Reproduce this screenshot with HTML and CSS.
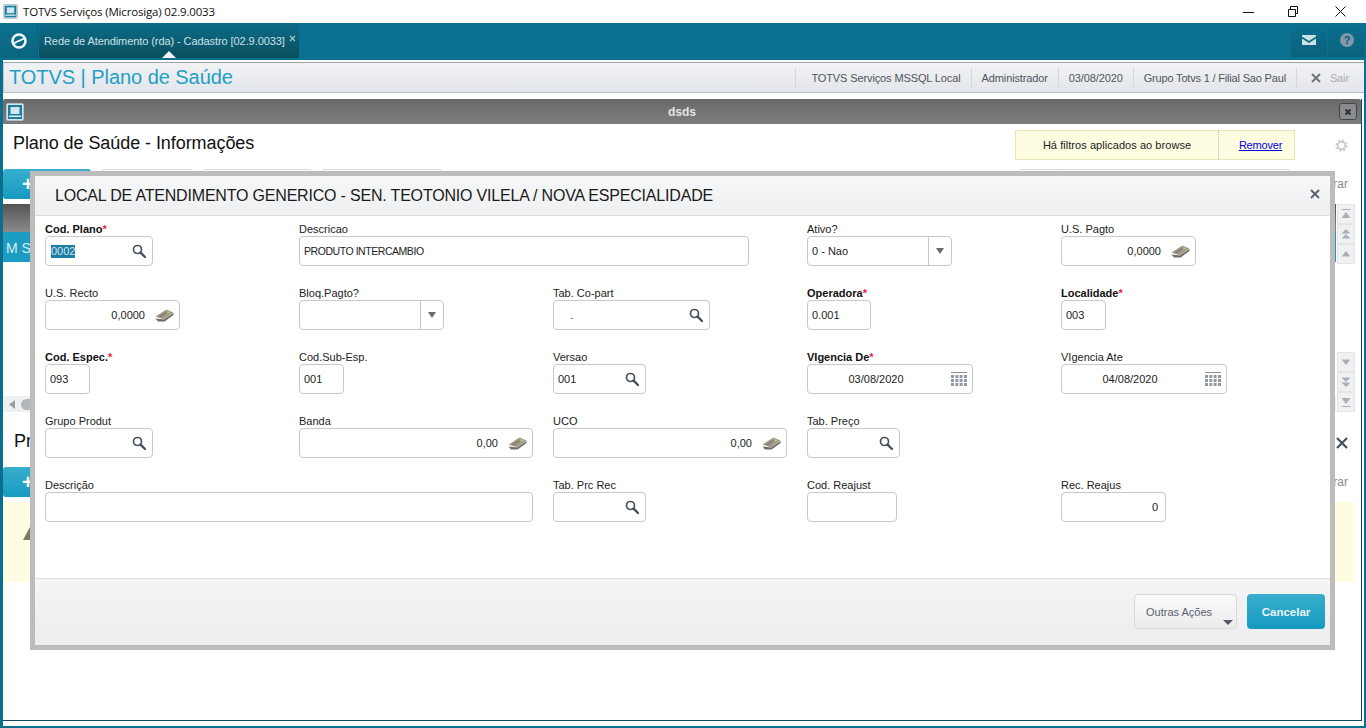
FILE: index.html
```html
<!DOCTYPE html>
<html lang="pt-BR">
<head>
<meta charset="utf-8">
<title>TOTVS Serviços (Microsiga) 02.9.0033</title>
<link rel="stylesheet" href="styles.css">
</head>
<body>
<svg class="defs" width="0" height="0" aria-hidden="true">
  <defs>
    <symbol id="i-search" viewBox="0 0 14 14"><circle cx="5.5" cy="5.5" r="4" fill="#fff" stroke="#46505e" stroke-width="1.7"/><path d="M8.6 8.6 13 13" stroke="#46505e" stroke-width="2.4" stroke-linecap="round"/></symbol>
    <symbol id="i-money" viewBox="0 0 19 14"><path d="M0.500 10.500 3 13.500H9.500L18.500 7V5L9 11.500Z" fill="#6f6b62"/><path d="M0.500 8.500 11.500 1.500 18.500 4.500 9 11.500Z" fill="#a29c8e"/><path d="M3 8.500 11.500 3 14 4 6 9.800Z" fill="#8d8778"/><path d="M10.500 3.700 12.500 2.400 16.500 4.400 13.800 6.300Z" fill="#95a87a"/><path d="M12 3.900 13 3.200 15 4.400 13.800 5.300Z" fill="#bddb7c"/></symbol>
    <symbol id="i-cal" viewBox="0 0 16 14"><path d="M0 0.5H16" stroke="#8c929c" stroke-width="1"/><g fill="#9299a3"><rect x="0" y="3" width="3" height="3"/><rect x="4.300" y="3" width="3" height="3"/><rect x="8.600" y="3" width="3" height="3"/><rect x="13" y="3" width="3" height="3"/><rect x="0" y="7" width="3" height="3"/><rect x="4.300" y="7" width="3" height="3"/><rect x="8.600" y="7" width="3" height="3"/><rect x="13" y="7" width="3" height="3"/><rect x="0" y="11" width="3" height="3"/><rect x="4.300" y="11" width="3" height="3"/><rect x="8.600" y="11" width="3" height="3"/><rect x="13" y="11" width="3" height="3"/></g></symbol>
    <symbol id="i-monitor" viewBox="0 0 18 18"><rect x="0.500" y="0.500" width="17" height="17" rx="1.500" fill="#d8e6ec" stroke="#aebfc8"/><rect x="2" y="2" width="14" height="14" fill="#1d7b9f"/><rect x="4.500" y="4" width="9" height="7" fill="#cfe6ef"/><path d="M3.500 12.500H14.500L15.500 14H2.500Z" fill="#e7f1f5"/></symbol>
    <symbol id="i-top" viewBox="0 0 10 10"><path d="M.5 0H9.500V1H.5Z M5 3 9.500 9H.5Z" fill="#aab0b8"/></symbol>
    <symbol id="i-up2" viewBox="0 0 10 10"><path d="M5 0 9.500 4.500H.5Z M5 5 9.500 9.500H.5Z" fill="#aab0b8"/></symbol>
    <symbol id="i-up" viewBox="0 0 10 10"><path d="M5 2 9.500 7.500H.5Z" fill="#aab0b8"/></symbol>
    <symbol id="i-down" viewBox="0 0 10 10"><path d="M5 8 9.500 2.500H.5Z" fill="#aab0b8"/></symbol>
    <symbol id="i-down2" viewBox="0 0 10 10"><path d="M5 5 9.500 .5H.5Z M5 10 9.500 5.500H.5Z" fill="#aab0b8"/></symbol>
    <symbol id="i-bottom" viewBox="0 0 10 10"><path d="M5 7 9.500 1H.5Z M.5 9H9.500V10H.5Z" fill="#aab0b8"/></symbol>
  </defs>
</svg>

<header class="titlebar">
  <svg class="title-icon" width="15" height="15"><use href="#i-monitor"/></svg>
  <span class="title-text">TOTVS Serviços (Microsiga) 02.9.0033</span>
  <div class="winctrls">
    <svg width="11" height="11" viewBox="0 0 11 11"><path d="M0 6.500H11" stroke="#111"/></svg>
    <svg class="ctrl-restore" width="10" height="11" viewBox="0 0 10 11"><path d="M.5 3.500H7.500V10.500H.5Z M2.500 3V.5H9.500V7.500H8" fill="none" stroke="#111"/></svg>
    <svg width="11" height="11" viewBox="0 0 11 11"><path d="M.5 .5 10.500 10.500M10.500 .5 .5 10.500" stroke="#111"/></svg>
  </div>
</header>

<nav class="appbar">
  <div class="logo-cell">
    <svg width="18" height="18" viewBox="0 0 18 18"><circle cx="9" cy="9" r="6.500" fill="none" stroke="#eef5f7" stroke-width="2.600"/><path d="M4 11.500C8 8.500 9 9.500 14 6.500" fill="none" stroke="#eef5f7" stroke-width="2"/></svg>
  </div>
  <div class="tab">
    <span class="tab-text">Rede de Atendimento (rda) - Cadastro [02.9.0033]</span>
    <svg width="7" height="7" viewBox="0 0 7 7"><path d="M1 1 6 6M6 1 1 6" stroke="#a8c6d0" stroke-width="1.200"/></svg>
    <i class="tab-mark"></i>
  </div>
  <div class="app-actions">
    <div class="app-action mail">
      <svg width="14" height="10" viewBox="0 0 14 10"><path d="M0 0H14V1.500L7 6 0 1.500Z M0 3.500 7 8 14 3.500V10H0Z" fill="#cfe0e6"/></svg>
    </div>
    <div class="app-action help">
      <svg width="14" height="14" viewBox="0 0 14 14"><circle cx="7" cy="7" r="7" fill="#7f9aa8"/><text class="help-q" x="7" y="11" text-anchor="middle">?</text></svg>
    </div>
  </div>
</nav>

<div class="workspace">
  <div class="modulebar">
    <h1 class="module-title">TOTVS | Plano de Saúde</h1>
    <div class="status">
      <span class="status-item first">TOTVS Serviços MSSQL Local</span>
      <span class="status-item">Administrador</span>
      <span class="status-item">03/08/2020</span>
      <span class="status-item group">Grupo Totvs 1 / Filial Sao Paul</span>
      <span class="status-item logout">
        <svg width="10" height="10" viewBox="0 0 10 10"><path d="M1 1 9 9M9 1 1 9" stroke="#6d7480" stroke-width="2"/></svg>
        <span>Sair</span>
      </span>
    </div>
  </div>

  <section class="window">
    <div class="window-bar">
      <svg width="18" height="18"><use href="#i-monitor"/></svg>
      <span class="window-name">dsds</span>
      <span class="window-close"><svg width="8" height="8" viewBox="0 0 8 8"><path d="M1.500 1.500 6.500 6.500M6.500 1.500 1.500 6.500" stroke="#2b3442" stroke-width="2"/></svg></span>
    </div>

    <div class="panel-head">
      <h2 class="panel-title">Plano de Saúde - Informações</h2>
      <div class="filter-note">
        <span class="filter-text">Há filtros aplicados ao browse</span>
        <a class="filter-link" href="#">Remover</a>
      </div>
      <svg class="gear" width="13" height="13" viewBox="0 0 14 14"><circle cx="7" cy="7" r="4" fill="none" stroke="#c9cdd2" stroke-width="2"/><circle cx="7" cy="7" r="5.600" fill="none" stroke="#c9cdd2" stroke-width="2" stroke-dasharray="2.200 2.200"/></svg>
    </div>

    <div class="toolbar">
      <button class="tb-primary">+</button>
      <span class="tb-outline tb-a"></span>
      <span class="tb-outline tb-b"></span>
      <span class="tb-outline tb-c"></span>
      <div class="search"><span class="search-btn"></span><span class="search-box"></span></div>
      <span class="filter-label">rar</span>
    </div>

    <div class="browse">
      <div class="browse-table">
        <div class="browse-head"></div>
        <div class="browse-row">M S</div>
        <div class="browse-fill"></div>
        <div class="hscroll"><svg width="7" height="9" viewBox="0 0 7 9"><path d="M6 0V9L0 4.500Z" fill="#9aa0a8"/></svg><i class="hthumb"></i></div>
      </div>
      <div class="vscroll">
        <span class="sb-btn"><svg width="10" height="10"><use href="#i-top"/></svg></span>
        <span class="sb-btn"><svg width="10" height="10"><use href="#i-up2"/></svg></span>
        <span class="sb-btn"><svg width="10" height="10"><use href="#i-up"/></svg></span>
        <span class="sb-gap"></span>
        <span class="sb-btn"><svg width="10" height="10"><use href="#i-down"/></svg></span>
        <span class="sb-btn"><svg width="10" height="10"><use href="#i-down2"/></svg></span>
        <span class="sb-btn"><svg width="10" height="10"><use href="#i-bottom"/></svg></span>
      </div>
    </div>

    <div class="section-head">
      <h2 class="panel-title">Pr</h2>
      <svg width="12" height="12" viewBox="0 0 12 12"><path d="M1 1 11 11M11 1 1 11" stroke="#46505e" stroke-width="2.200"/></svg>
    </div>

    <div class="toolbar second">
      <button class="tb-primary">+</button>
      <span class="filter-label">rar</span>
    </div>

    <div class="warning">
      <svg width="16" height="15" viewBox="0 0 16 15"><path d="M8 0 16 15H0Z" fill="#7c7a63"/></svg>
    </div>
  </section>

  <div class="modal">
    <div class="modal-head">
      <h3 class="modal-title">LOCAL DE ATENDIMENTO GENERICO - SEN. TEOTONIO VILELA / NOVA ESPECIALIDADE</h3>
      <svg class="modal-close" width="10" height="10" viewBox="0 0 10 10"><path d="M1 1 9 9M9 1 1 9" stroke="#5a6270" stroke-width="2"/></svg>
    </div>
    <form class="form">
      <div class="field"><label class="req">Cod. Plano<em>*</em></label><div class="input w108"><span class="selected">0002</span><svg class="ic-search" width="14" height="14"><use href="#i-search"/></svg></div></div>
      <div class="field span2"><label>Descricao</label><div class="input w450"><span class="val caps">PRODUTO INTERCAMBIO</span></div></div>
      <div class="field"><label>Ativo?</label><div class="input select w145"><span class="val">0 - Nao</span><i class="caret-cell"><i class="caret"></i></i></div></div>
      <div class="field"><label>U.S. Pagto</label><div class="input w135"><span class="val right">0,0000</span><svg class="ic-money" width="19" height="14"><use href="#i-money"/></svg></div></div>

      <div class="field"><label>U.S. Recto</label><div class="input w135"><span class="val right">0,0000</span><svg class="ic-money" width="19" height="14"><use href="#i-money"/></svg></div></div>
      <div class="field"><label>Bloq.Pagto?</label><div class="input select w145"><span class="val"></span><i class="caret-cell"><i class="caret"></i></i></div></div>
      <div class="field"><label>Tab. Co-part</label><div class="input w157"><span class="val pre">    .</span><svg class="ic-search" width="14" height="14"><use href="#i-search"/></svg></div></div>
      <div class="field"><label class="req">Operadora<em>*</em></label><div class="input w64"><span class="val">0.001</span></div></div>
      <div class="field"><label class="req">Localidade<em>*</em></label><div class="input w45"><span class="val">003</span></div></div>

      <div class="field"><label class="req">Cod. Espec.<em>*</em></label><div class="input w45"><span class="val">093</span></div></div>
      <div class="field"><label>Cod.Sub-Esp.</label><div class="input w45"><span class="val">001</span></div></div>
      <div class="field"><label>Versao</label><div class="input w93"><span class="val">001</span><svg class="ic-search" width="14" height="14"><use href="#i-search"/></svg></div></div>
      <div class="field"><label class="req">VIgencia De<em>*</em></label><div class="input w166"><span class="val center">03/08/2020</span><svg class="ic-cal" width="16" height="14"><use href="#i-cal"/></svg></div></div>
      <div class="field"><label>VIgencia Ate</label><div class="input w166"><span class="val center">04/08/2020</span><svg class="ic-cal" width="16" height="14"><use href="#i-cal"/></svg></div></div>

      <div class="field"><label>Grupo Produt</label><div class="input w108"><span class="val"></span><svg class="ic-search" width="14" height="14"><use href="#i-search"/></svg></div></div>
      <div class="field"><label>Banda</label><div class="input w234"><span class="val right">0,00</span><svg class="ic-money" width="19" height="14"><use href="#i-money"/></svg></div></div>
      <div class="field"><label>UCO</label><div class="input w234"><span class="val right">0,00</span><svg class="ic-money" width="19" height="14"><use href="#i-money"/></svg></div></div>
      <div class="field row-end"><label>Tab. Preço</label><div class="input w93"><span class="val"></span><svg class="ic-search" width="14" height="14"><use href="#i-search"/></svg></div></div>

      <div class="field span2"><label>Descrição</label><div class="input w488"><span class="val"></span></div></div>
      <div class="field"><label>Tab. Prc Rec</label><div class="input w93"><span class="val"></span><svg class="ic-search" width="14" height="14"><use href="#i-search"/></svg></div></div>
      <div class="field"><label>Cod. Reajust</label><div class="input w90"><span class="val"></span></div></div>
      <div class="field"><label>Rec. Reajus</label><div class="input w105"><span class="val right plain">0</span></div></div>
    </form>
    <footer class="modal-foot">
      <button class="btn-more" type="button">Outras Ações<i class="more-caret"></i></button>
      <button class="btn-cancel" type="button">Cancelar</button>
    </footer>
  </div>
</div>
</body>
</html>
```
FILE: styles.css
```css
* { box-sizing: border-box; }
html, body { margin: 0; padding: 0; }
body {
  width: 1366px;
  height: 728px;
  overflow: hidden;
  display: flex;
  flex-direction: column;
  background: #fff;
  font-family: "Liberation Sans", Arial, sans-serif;
  font-size: 11px;
  color: #222;
}
.defs { position: absolute; }
h1, h2, h3 { margin: 0; font-weight: 400; }

/* OS title bar */
.titlebar { height: 23px; flex: none; display: flex; align-items: center; padding-left: 3px; background: #fff; }
.title-icon { margin-right: 5px; }
.title-text { font-family: "Open Sans", sans-serif; font-size: 11.500px; letter-spacing: -0.17px; color: #111; }
.winctrls { margin-left: auto; display: flex; align-items: center; gap: 34px; padding-right: 20px; }
.ctrl-restore { margin-right: 3px; }

/* App bar */
.appbar { height: 37px; flex: none; display: flex; background: #0b7190; padding-right: 1px; }
.logo-cell { width: 38px; height: 35px; display: flex; align-items: center; justify-content: center; border-right: 1px solid #0a5f7a; background: linear-gradient(#0b7190, #0a6580); }
.tab { position: relative; margin-left: 1px; width: 260px; height: 35px; display: flex; align-items: center; gap: 4px; padding-left: 5px; color: #cfe0e6; font-size: 11px; background: linear-gradient(#0c6d8b, #09505f 95%); }
.tab-text { white-space: nowrap; letter-spacing: -0.08px; }
.tab svg { margin-top: -4px; }
.tab-mark { position: absolute; left: 123px; bottom: 0; width: 0; height: 0; border: 7px solid transparent; border-top: 0; border-bottom-color: #f2f4f5; }
.app-actions { margin-left: auto; display: flex; gap: 1px; }
.app-action { height: 34px; display: flex; align-items: center; justify-content: center; background: linear-gradient(#0b7190, #0a617c); }
.mail { width: 36px; }
.help { width: 37px; }
.help-q { font: 700 11px "Liberation Sans", sans-serif; fill: #0a5a72; }

/* Workspace */
.workspace { position: relative; flex: 1; min-height: 0; display: flex; flex-direction: column; border-left: 3px solid #0a6f8f; border-right: 2px solid #0a6f8f; border-bottom: 2px solid #0a6f8f; padding: 2px 0 5px; }
.modulebar { height: 31px; flex: none; display: flex; align-items: center; padding-left: 5px; background: linear-gradient(#f1f2f4, #e3e6ea); border-top: 1px solid #9ea3a8; border-bottom: 1px solid #b9bdc2; border-left: 1px solid #c4c7ca; }
.module-title { font-size: 20px; color: #1f9fc5; letter-spacing: -0.05px; }
.status { margin-left: auto; display: flex; height: 20px; }
.status-item { display: flex; align-items: center; padding: 0 10px; border-left: 1px solid #d3d6da; color: #4f5560; font-size: 11px; letter-spacing: -0.12px; }
.status-item.first { padding-left: 15px; }
.status-item.group { letter-spacing: -0.18px; }
.status-item.logout { gap: 9px; padding: 0 15px 0 14px; color: #a9adb3; }

/* Background window */
.window { flex: 1; min-height: 0; margin-top: 6px; margin-right: 2px; display: flex; flex-direction: column; background: #fff; border-right: 1px solid #0a4a60; border-bottom: 1px solid #0a4a60; }
.window-bar { position: relative; height: 25px; flex: none; display: flex; align-items: center; justify-content: space-between; padding: 0 4px 0 3px; background: linear-gradient(#696969, #7d7d7d); border-radius: 2px 2px 0 0; }
.window-name { color: #e4e4e4; font-weight: 700; font-size: 12px; margin-left: 1px; }
.window-close { width: 18px; height: 17px; display: flex; align-items: center; justify-content: center; border: 1px solid #3f4650; border-radius: 3px; background: #8c8c8c; }

.panel-head { height: 45px; flex: none; display: flex; align-items: center; padding: 0 13px 0 10px; }
.panel-title { font-size: 18px; color: #111; letter-spacing: -0.07px; }
.panel-head .panel-title { margin-top: -6px; }
.filter-note { margin-left: auto; margin-right: 40px; margin-top: -3px; height: 30px; width: 280px; display: flex; align-items: center; background: #fefde2; border: 1px solid #e6e5b8; }
.filter-text { width: 203px; height: 100%; display: flex; align-items: center; justify-content: center; border-right: 1px dotted #b4b8c8; color: #222; letter-spacing: 0.05px; }
.filter-link { flex: 1; padding-left: 8px; text-align: center; color: #0000ee; letter-spacing: -0.2px; }
.gear { margin-top: -3px; }

.toolbar { height: 30px; flex: none; display: flex; align-items: flex-start; }
.tb-primary { width: 88px; height: 30px; padding: 0 0 0 19px; border: 0; border-radius: 3px; background: linear-gradient(#38aecd, #169ac0); color: #fff; font: 700 20px "Liberation Sans", sans-serif; text-align: left; }
.tb-outline { height: 28px; border: 1px solid #d8d8d8; border-radius: 3px; background: #fff; }
.tb-a { width: 92px; margin-left: 10px; }
.tb-b { width: 109px; margin-left: 10px; }
.tb-c { width: 120px; margin-left: 10px; }
.search { margin-left: 577px; display: flex; height: 28px; width: 271px; }
.search-btn { width: 39px; border: 1px solid #d8d8d8; border-radius: 3px 0 0 3px; }
.search-box { flex: 1; border: 1px solid #d8d8d8; border-left: 0; border-radius: 0 3px 3px 0; }
.filter-label { margin-left: auto; margin-right: 13px; margin-top: 8px; color: #8a8a8a; font-size: 12px; }

.browse { height: 208px; flex: none; margin-top: 5px; display: flex; }
.browse-table { flex: 1; display: flex; flex-direction: column; }
.browse-head { height: 28px; flex: none; background: linear-gradient(#555, #8a8a8a); }
.browse-row { height: 30px; flex: none; padding: 8px 0 0 3px; background: #1c9cc1; color: #d8eff6; font-size: 14px; white-space: nowrap; }
.browse-fill { flex: 1; }
.hscroll { height: 16px; flex: none; display: flex; align-items: center; gap: 5px; padding-left: 6px; background: #eef0f1; }
.hthumb { width: 40px; height: 11px; border-radius: 6px; background: #b4b8bd; }
.vscroll { width: 18px; margin-left: 1px; margin-right: 6px; display: flex; flex-direction: column; }
.sb-btn { height: 20px; flex: none; display: flex; align-items: center; justify-content: center; background: #f0f1f2; border: 1px solid #e3e4e6; }
.sb-gap { flex: 1; }

.section-head { height: 55px; flex: none; display: flex; align-items: center; justify-content: space-between; padding: 3px 13px 0 11px; }
.section-head svg { margin-top: 4px; }
.toolbar.second { height: 30px; }
.warning { height: 80px; flex: none; margin: 5px 6px 0 0; padding: 23px 0 0 20px; background: #fefde2; }

/* Modal */
.modal { position: absolute; left: 27px; top: 111px; width: 1305px; height: 479px; display: flex; flex-direction: column; border: 5px solid #bcbcbc; background: #fff; }
.modal-head { height: 40px; flex: none; display: flex; align-items: center; justify-content: space-between; padding: 1px 10px 0 20px; background: linear-gradient(#f6f7f7, #eff0f2); border-bottom: 1px solid #dcdcdc; }
.modal-title { font-size: 16px; color: #1a1a1a; letter-spacing: -0.19px; }
.modal-close { margin-top: -5px; }
.form { flex: 1; display: grid; grid-template-columns: repeat(5, 234px); column-gap: 20px; row-gap: 19px; grid-auto-rows: 45px; padding: 5px 0 0 10px; align-content: start; }
.span2 { grid-column: span 2; }
.row-end { grid-column: 4 / span 2; }
.field { display: flex; flex-direction: column; min-width: 0; }
.field label { height: 15px; flex: none; font-size: 11px; line-height: 16px; color: #222; }
.field label.req { font-weight: 700; color: #111; }
.field label em { color: #f0213a; font-style: normal; font-weight: 700; }
.input { height: 30px; flex: none; display: flex; align-items: center; border: 1px solid #c6c8cb; border-radius: 4px; background: #fff; padding: 0 5px 0 4px; color: #222; font-size: 11px; }
.val { flex: 1; min-width: 0; white-space: nowrap; }
.caps { font-size: 10.500px; letter-spacing: -0.45px; }
.pre { white-space: pre; }
.right { text-align: right; padding-right: 10px; }
.right.plain { padding-right: 2px; }
.center { text-align: center; padding-right: 11px; }
.selected { background: #1c7ea4; color: #cfe3ea; margin-left: 1px; line-height: 13px; margin-right: auto; }
.ic-search { margin-right: 1px; flex: none; }
.ic-money { flex: none; }
.ic-cal { flex: none; }
.w45 { width: 45px; } .w64 { width: 64px; } .w90 { width: 90px; } .w93 { width: 93px; }
.w105 { width: 105px; } .w108 { width: 108px; } .w135 { width: 135px; } .w145 { width: 145px; }
.w157 { width: 157px; } .w166 { width: 166px; } .w234 { width: 234px; } .w450 { width: 450px; } .w488 { width: 488px; }
.select { padding-right: 0; }
.caret-cell { width: 23px; height: 100%; flex: none; display: flex; align-items: center; justify-content: center; border-left: 1px solid #c6c8cb; }
.caret { width: 0; height: 0; border: 4.500px solid transparent; border-top: 6px solid #666c76; border-bottom: 0; }
.modal-foot { height: 67px; flex: none; display: flex; justify-content: flex-end; gap: 10px; padding: 15px 5px 0 0; background: linear-gradient(#f4f5f5, #ecedef); border-top: 1px solid #dcdcdc; }
.btn-more { position: relative; width: 103px; height: 35px; border: 1px solid #d8d9da; border-radius: 4px; background: linear-gradient(#fafafa, #ececee); color: #5a6070; font: 11px "Liberation Sans", sans-serif; text-align: left; padding: 0 0 0 11px; }
.more-caret { position: absolute; right: 3px; bottom: 3px; border: 5px solid transparent; border-top: 5px solid #555c68; border-bottom: 0; }
.btn-cancel { width: 78px; height: 35px; padding: 0; border: 0; border-radius: 4px; background: linear-gradient(#38aecd, #169ac0); color: #eaf6fa; font: 700 11.500px "Liberation Sans", sans-serif; }
```
